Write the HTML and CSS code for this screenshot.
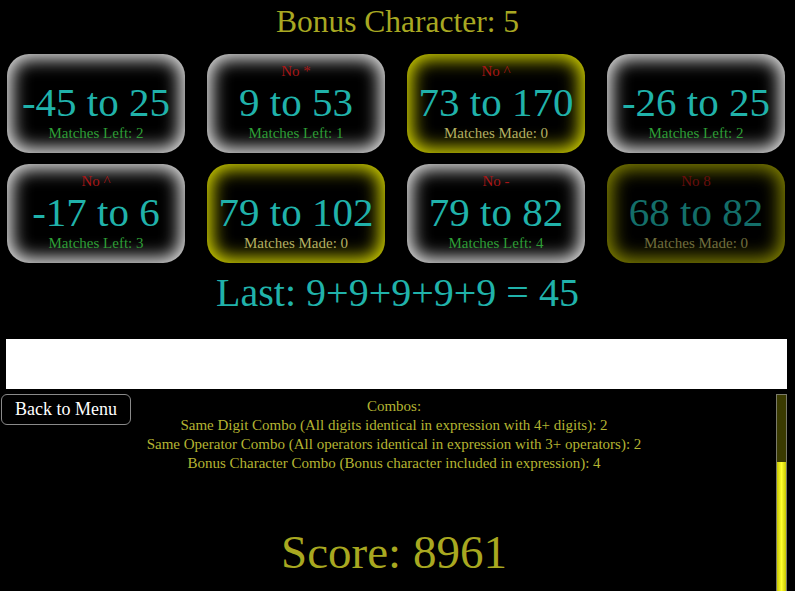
FILE: index.html
```html
<!DOCTYPE html>
<html>
<head>
<meta charset="utf-8">
<link rel="stylesheet" href="styles.css">
</head>
<body>
<div class="page">
  <h1 class="title">Bonus Character: 5</h1>
  <div class="cards">
    <div class="card card-white"><div class="rule"></div><div class="range">-45 to 25</div><div class="left">Matches Left: 2</div></div>
    <div class="card card-white"><div class="rule">No *</div><div class="range">9 to 53</div><div class="left">Matches Left: 1</div></div>
    <div class="card card-yellow"><div class="rule">No ^</div><div class="range">73 to 170</div><div class="made">Matches Made: 0</div></div>
    <div class="card card-white"><div class="rule"></div><div class="range">-26 to 25</div><div class="left">Matches Left: 2</div></div>
    <div class="card card-white"><div class="rule">No ^</div><div class="range">-17 to 6</div><div class="left">Matches Left: 3</div></div>
    <div class="card card-yellow"><div class="rule"></div><div class="range">79 to 102</div><div class="made">Matches Made: 0</div></div>
    <div class="card card-white"><div class="rule">No -</div><div class="range">79 to 82</div><div class="left">Matches Left: 4</div></div>
    <div class="card card-yellow card-dim"><div class="rule">No 8</div><div class="range">68 to 82</div><div class="made">Matches Made: 0</div></div>
  </div>
  <div class="last">Last: 9+9+9+9+9 = 45</div>
  <div class="input-bar"></div>
  <div class="lower">
    <button class="back">Back to Menu</button>
    <div class="combos">
      <div>Combos:</div>
      <div>Same Digit Combo (All digits identical in expression with 4+ digits): 2</div>
      <div>Same Operator Combo (All operators identical in expression with 3+ operators): 2</div>
      <div>Bonus Character Combo (Bonus character included in expression): 4</div>
    </div>
    <div class="meter"><div class="meter-fill"></div></div>
    <div class="score">Score: 8961</div>
  </div>
</div>
</body>
</html>
```

FILE: styles.css
```css
html, body {
  margin: 0;
  padding: 0;
  background: #000;
  overflow: hidden;
  height: 591px;
}
body {
  font-family: "Liberation Serif", "Times New Roman", serif;
}
.page {
  display: flex;
  flex-direction: column;
}
.title {
  margin: 5px 0 0;
  font-size: 31.5px;
  line-height: 34px;
  font-weight: normal;
  text-align: center;
  color: #a8a822;
}
.cards {
  margin-top: 15px;
  padding-left: 7px;
  display: grid;
  grid-template-columns: repeat(4, 178px);
  column-gap: 22px;
  row-gap: 11px;
}
.card {
  height: 99px;
  box-sizing: border-box;
  padding-top: 9px;
  border-radius: 22px;
  background: #000;
  text-align: center;
  display: flex;
  flex-direction: column;
}
.card-white {
  box-shadow: inset 0 0 18px 5px #e6e6e6;
}
.card-yellow {
  box-shadow: inset 0 0 18px 5px #d6d600;
}
.card-dim {
  opacity: 0.62;
}
.rule {
  height: 17px;
  font-size: 15px;
  line-height: 17px;
  color: #a81616;
}
.range {
  font-size: 41px;
  line-height: 45px;
  color: #20b2aa;
  white-space: nowrap;
}
.left, .made {
  font-size: 15px;
  line-height: 17px;
}
.left {
  color: #2e9e36;
}
.made {
  color: #b4b060;
}
.last {
  margin-top: 7px;
  text-align: center;
  font-size: 40px;
  line-height: 46px;
  color: #20b2aa;
}
.input-bar {
  margin: 23px 8px 0 6px;
  height: 50px;
  background: #fff;
}
.lower {
  margin-top: 5px;
  padding: 0 8px 0 1px;
  display: grid;
  grid-template-columns: 1fr auto 1fr;
  align-items: start;
}
.back {
  grid-column: 1;
  grid-row: 1;
  justify-self: start;
  width: 130px;
  height: 31px;
  padding: 0;
  background: #000;
  color: #fff;
  border: 1px solid #8a8a8a;
  border-radius: 6px;
  font-family: "Liberation Serif", "Times New Roman", serif;
  font-size: 18px;
}
.combos {
  grid-column: 2;
  grid-row: 1;
  padding-top: 3px;
  text-align: center;
  font-size: 15px;
  line-height: 19px;
  color: #b4b432;
  white-space: nowrap;
}
.meter {
  grid-column: 3;
  grid-row: 1 / span 2;
  justify-self: end;
  width: 9px;
  height: 205px;
  border: 1px solid #7a7a6a;
  background: #3a3a00;
  display: flex;
  flex-direction: column;
  justify-content: flex-end;
}
.meter-fill {
  height: 138px;
  background: linear-gradient(to right, #c8c800, #ffff30 50%, #c8c800);
}
.score {
  grid-column: 2;
  grid-row: 2;
  margin-top: 30px;
  text-align: center;
  font-size: 47px;
  line-height: 53px;
  color: #a8a820;
}
```
